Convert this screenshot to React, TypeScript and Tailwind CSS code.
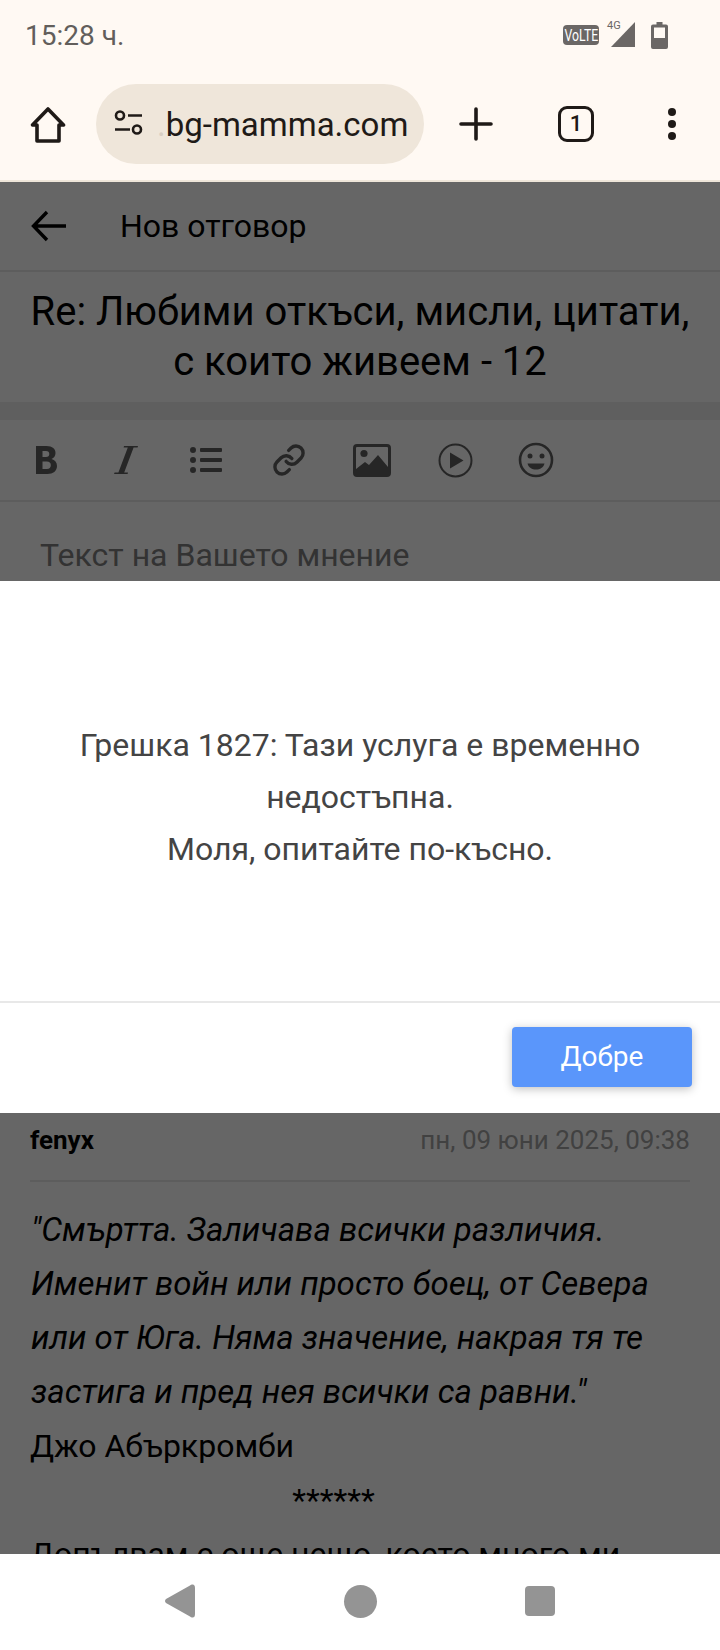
import React from "react";
import { FaListUl } from "react-icons/fa";
import { Link as LinkIcon } from "lucide-react";

const Home = () => (
  <svg width="36" height="37" viewBox="0 0 36 37" fill="none" stroke="#1f1a17" strokeWidth="3.6" strokeLinejoin="round">
    <path d="M18 3 L33.5 19 H29 V35 H7 V19 H2.5 Z" />
  </svg>
);

const Tune = () => (
  <svg width="32" height="32" viewBox="0 0 32 32" fill="none" stroke="#1f1a17" strokeWidth="2.6">
    <circle cx="7" cy="7.5" r="4" />
    <path d="M15 7.5 H29" />
    <path d="M2 21.5 H17" />
    <circle cx="24" cy="21.5" r="4" />
  </svg>
);

const Bold = () => (
  <svg width="21" height="28" viewBox="0 0 21 28" fill="#606060">
    <path fillRule="evenodd" d="M0 0 H10.5 C16.5 0 19.5 3 19.5 7 C19.5 10 18 12 15.5 13 C19 14 21 16.5 21 20 C21 25 17 28 11.5 28 H0 Z M6.5 5 V11 H10 C12.2 11 13.3 10 13.3 8 C13.3 6 12.2 5 10 5 Z M6.5 15.5 V23 H10.8 C13.5 23 14.8 21.6 14.8 19.2 C14.8 16.8 13.5 15.5 10.8 15.5 Z" />
  </svg>
);

const Italic = () => (
  <svg width="24" height="28" viewBox="0 0 24 28" fill="#606060">
    <path d="M10 0 H24 L23.6 1.6 H19.6 L10.2 26.4 H14 L13.6 28 H0 L0.6 26.4 H4.4 L13.8 1.6 H9.6 Z" />
  </svg>
);

const Image = () => (
  <svg width="38" height="33" viewBox="0 0 38 33" fill="#606060">
    <path fillRule="evenodd" d="M4 0 H34 A4 4 0 0 1 38 4 V29 A4 4 0 0 1 34 33 H4 A4 4 0 0 1 0 29 V4 A4 4 0 0 1 4 0 Z M4 3 A1 1 0 0 0 3 4 V25 L12 18 L16 21 L25 11 L35 23 V4 A1 1 0 0 0 34 3 Z" />
    <circle cx="11" cy="9.5" r="3.6" />
  </svg>
);

const Play = () => (
  <svg width="35" height="35" viewBox="0 0 35 35" fill="none" stroke="#606060" strokeWidth="2">
    <circle cx="17.5" cy="17.5" r="16" />
    <path d="M12 9.5 L25.5 17.5 L12 25.5 Z" fill="#606060" stroke="none" />
  </svg>
);

const Smile = () => (
  <svg width="36" height="36" viewBox="0 0 36 36" fill="none" stroke="#606060" strokeWidth="2.6">
    <circle cx="18" cy="18" r="16" />
    <circle cx="12" cy="14" r="2.5" fill="#606060" stroke="none" />
    <circle cx="24" cy="14" r="2.5" fill="#606060" stroke="none" />
    <path d="M9.5 21.5 H26.5 C25.5 25.5 22 27.5 18 27.5 C14 27.5 10.5 25.5 9.5 21.5 Z" fill="#606060" stroke="none" />
  </svg>
);

const Toolbar = () => (
  <div className="flex h-[82px] items-center border-b-2 border-[#e8e8e8] text-[#606060]">
    <div className="ml-[36px] w-[78px]"><Bold /></div>
    <div className="w-[76px]"><Italic /></div>
    <div className="w-[82px]"><FaListUl size={32} /></div>
    <div className="w-[81px]"><LinkIcon size={34} strokeWidth={2.4} /></div>
    <div className="w-[85px]"><Image /></div>
    <div className="w-[80px]"><Play /></div>
    <Smile />
  </div>
);

export default function App() {
  return (
    <div className="flex h-[1650px] w-[720px] flex-col overflow-hidden bg-white font-['Roboto',sans-serif]">
      <div className="flex h-[182px] flex-col border-b-2 border-[#efe6da] bg-[#fff9f3]">
        <div className="flex h-[70px] items-center justify-between pl-[25px] pr-[52px]">
          <span className="pt-[2px] text-[28px] leading-none text-[#625e5b]">15:28 ч.</span>
          <div className="flex items-center">
            <span className="flex h-[20px] w-[36px] items-center justify-center rounded-[4px] bg-[#6b6765] text-white">
              <span className="scale-x-[0.72] text-[17px] leading-none">VoLTE</span>
            </span>
            <div className="relative ml-[11px] h-[26px] w-[26px]">
              <svg width="26" height="26" viewBox="0 0 26 26" fill="#6b6765"><path d="M25 0 V25 H1 Z" /></svg>
              <span className="absolute left-[-3px] top-[-2px] text-[11px] leading-none text-[#6b6765]">4G</span>
            </div>
            <svg className="ml-[15px]" width="17" height="27" viewBox="0 0 17 27" fill="#6b6765">
              <path fillRule="evenodd" d="M5.5 0 H11.5 V2.5 H15 A2 2 0 0 1 17 4.5 V25 A2 2 0 0 1 15 27 H2 A2 2 0 0 1 0 25 V4.5 A2 2 0 0 1 2 2.5 H5.5 Z M3 5.5 V16 H14 V5.5 Z" />
            </svg>
          </div>
        </div>
        <div className="flex items-center pt-[14px]">
          <div className="ml-[30px] w-[66px]"><Home /></div>
          <div className="flex h-[80px] w-[328px] items-center overflow-hidden rounded-full bg-[#efe6da] pl-[17px]">
            <Tune />
            <span className="ml-[12px] whitespace-nowrap text-[33px] leading-none text-[#1f1a17]"><span className="text-[#d8cfc4]">.</span>bg-mamma.com</span>
          </div>
          <svg className="ml-[35px]" width="34" height="34" viewBox="0 0 34 34" stroke="#1f1a17" strokeWidth="3.6" strokeLinecap="round"><path d="M17 2 V32 M2 17 H32" /></svg>
          <div className="ml-[65px] flex h-[36px] w-[36px] items-center justify-center rounded-[9px] border-[3.5px] border-[#1f1a17] text-[22px] font-medium leading-none text-[#1f1a17]">1</div>
          <div className="ml-[74px] flex flex-col gap-[4px]">
            <span className="h-[8px] w-[8px] rounded-full bg-[#1f1a17]" />
            <span className="h-[8px] w-[8px] rounded-full bg-[#1f1a17]" />
            <span className="h-[8px] w-[8px] rounded-full bg-[#1f1a17]" />
          </div>
        </div>
      </div>

      <div className="relative h-[1372px] overflow-hidden bg-white text-black">
        <div className="flex h-[90px] items-center border-b-2 border-[#e8e8e8]">
          <svg className="ml-[31px]" width="36" height="32" viewBox="0 0 36 32" fill="none" stroke="#000" strokeWidth="3.4"><path d="M35 16 H3 M16 2 L2.5 16 L16 30" /></svg>
          <span className="ml-[53px] text-[32px] leading-none">Нов отговор</span>
        </div>
        <div className="flex h-[148px] items-center justify-center border-b-[18px] border-[#eeeeee] text-center text-[40px] leading-[50px]">
          <h1 className="font-normal">Re: Любими откъси, мисли, цитати,<br />с които живеем - 12</h1>
        </div>
        <Toolbar />
        <div className="h-[611px] pl-[40px] pt-[31px] text-[32px] leading-[44px] text-[#808080]">Текст на Вашето мнение</div>

        <div className="px-[30px]">
          <div className="flex h-[69px] items-center justify-between border-b-2 border-[#e8e8e8] pb-[12px]">
            <span className="text-[26px] font-bold">fenyx</span>
            <span className="text-[26px] text-[#a3a3a3]">пн, 09 юни 2025, 09:38</span>
          </div>
          <div className="pt-[21px] text-[32px] leading-[54px]">
            <p className="pl-[1px] text-[33px] italic">"Смъртта. Заличава всички различия.<br />Именит войн или просто боец, от Севера<br />или от Юга. Няма значение, накрая тя те<br />застига и пред нея всички са равни."</p>
            <p>Джо Абъркромби</p>
            <p className="pr-[53px] text-center">******</p>
            <p>Допълвам с още нещо, което много ми</p>
          </div>
        </div>

        <div className="absolute inset-0 bg-black/60" />
        <div className="absolute left-0 right-0 top-[399px] h-[532px] bg-white">
          <div className="flex h-[422px] flex-col items-center justify-center border-b-2 border-[#e8e8e8] pt-[12px] text-center text-[32px] leading-[52px] text-[#444444]">
            <p>Грешка 1827: Тази услуга е временно<br />недостъпна.<br />Моля, опитайте по-късно.</p>
          </div>
          <div className="flex justify-end pr-[28px] pt-[24px]">
            <button className="h-[60px] w-[180px] rounded-[4px] bg-[#5a96fb] text-[28px] text-white shadow-[0_2px_10px_rgba(0,0,0,0.25)]">Добре</button>
          </div>
        </div>
      </div>

      <div className="flex flex-1 items-center justify-center bg-white pb-[2px] pr-[2px]">
        <svg width="32" height="34" viewBox="0 0 32 34" fill="#949494"><path d="M28 0.5 Q31 0 31 4 V30 Q31 34 28 33.5 Q27 33.5 26 32.5 L2 19 Q0 17 2 15 L26 1.5 Q27 0.5 28 0.5 Z" /></svg>
        <span className="ml-[148px] h-[33px] w-[33px] rounded-full bg-[#949494]" />
        <span className="ml-[148px] h-[30px] w-[30px] rounded-[4px] bg-[#949494]" />
      </div>
    </div>
  );
}
